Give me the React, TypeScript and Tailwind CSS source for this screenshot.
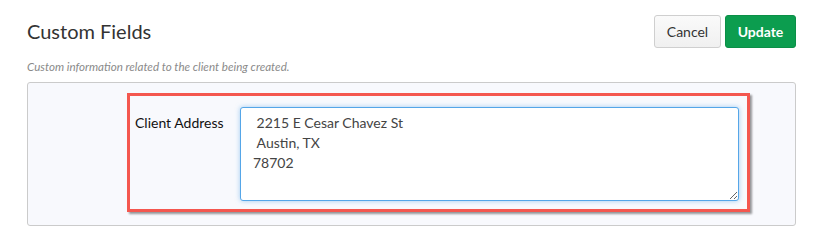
export default function App() {
  return (
    <div className="min-h-screen bg-white pl-[27px] pr-[22px] pt-[15px] font-['Lato',sans-serif]">
      <div className="flex items-start justify-between">
        <h1 className="pt-[3px] text-[20px] leading-[26px] text-[#333]">Custom Fields</h1>
        <div className="flex gap-[4px]">
          <button className="h-[33px] w-[67px] rounded-[3px] border border-[#cfcfcf] bg-gradient-to-b from-[#fafafa] to-[#f0f0f0] text-[14px] text-[#333]">
            Cancel
          </button>
          <button className="h-[33px] w-[71px] rounded-[3px] border border-[#0b8f47] bg-[#0c9d4f] text-[14px] font-bold text-white">
            Update
          </button>
        </div>
      </div>
      <p className="mt-[12px] text-[11.6px] italic leading-[14px] text-[#8a8a8a]">
        Custom information related to the client being created.
      </p>
      <div className="mt-[8px] rounded-[3px] border border-[#cbcbcb] bg-[#f8f9fd] pt-[10px] pb-[13px]">
        <div className="ml-[99px] flex w-[623px] border-[3px] border-[#f4574f] pt-[11px] pb-[8px] pl-[5px] shadow-[2px_2px_2px_rgba(0,0,0,0.4)]">
          <label className="w-[105px] pt-[6px] text-[14px] font-normal leading-[20px] text-[#111]">
            Client Address
          </label>
          <textarea
            readOnly
            defaultValue={" 2215 E Cesar Chavez St\n Austin, TX\n78702"}
            className="h-[94px] w-[499px] resize-y rounded-[3px] border border-[#55a6e8] bg-white px-[12px] pt-[5px] text-[14px] leading-[20px] text-[#444] shadow-[0_0_5px_rgba(85,166,232,0.55)] outline-none"
          />
        </div>
      </div>
    </div>
  );
}
